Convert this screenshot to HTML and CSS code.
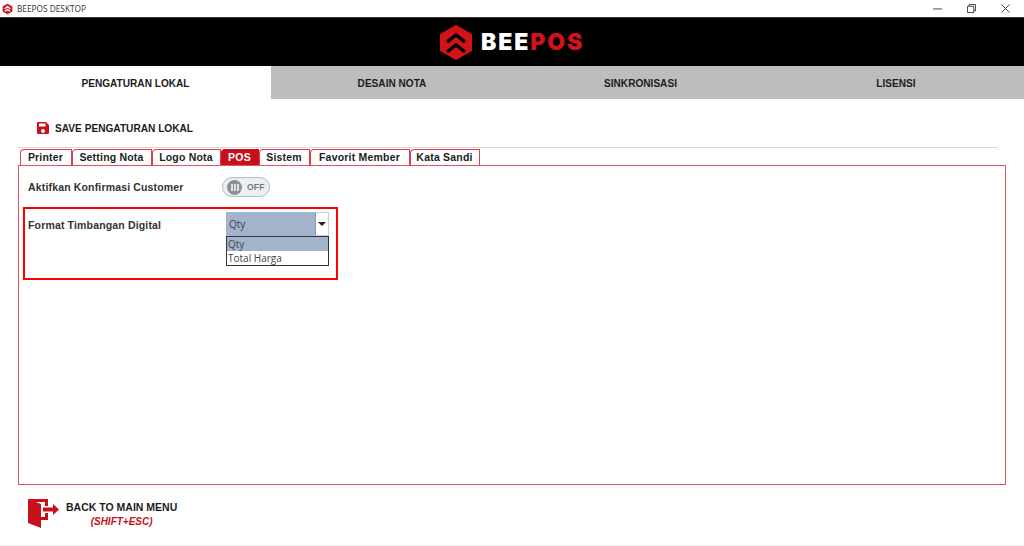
FILE: index.html
```html
<!DOCTYPE html>
<html lang="id">
<head>
<meta charset="utf-8">
<title>BEEPOS DESKTOP</title>
<link rel="stylesheet" href="styles.css">
</head>
<body>
<div class="app">
  <div class="titlebar">
    <div class="title-left">
      <svg class="title-logo" viewBox="0 0 24 24"><path fill="#d0121b" stroke="#d0121b" stroke-linejoin="round" d="M12 1l10 5.500v11L12 23 2 17.500v-11z"/><path fill="none" stroke="#fff" stroke-width="3" d="M5.500 11.500L12 7l6.500 4.500M6.500 17l5.500-4 5.500 4"/></svg>
      <span>BEEPOS DESKTOP</span>
    </div>
    <div class="win-controls">
      <svg viewBox="0 0 10 10" class="win-icon"><path d="M0 5.500h10" stroke="#333" fill="none"/></svg>
      <svg viewBox="0 0 10 10" class="win-icon"><path d="M.5 2.500h7v7h-7zM2.500 2.500v-2h7v7h-2" stroke="#333" fill="none"/></svg>
      <svg viewBox="0 0 10 10" class="win-icon"><path d="M.5.5l9 9M9.500.5l-9 9" stroke="#333" fill="none"/></svg>
    </div>
  </div>
  <header class="brand">
    <svg class="brand-logo" viewBox="0 0 32 35"><path fill="#d0121b" stroke="#d0121b" stroke-width="2" stroke-linejoin="round" d="M16 1l15 8.500v16L16 34 1 25.500v-16z"/><path fill="none" stroke="#000" stroke-width="3.400" d="M7 17l9-7 9 7M7 27l9-7 9 7"/></svg>
    <span class="brand-text">BEE<em>POS</em></span>
  </header>
  <nav class="main-tabs">
    <div class="main-tab active">PENGATURAN LOKAL</div>
    <div class="main-tab">DESAIN NOTA</div>
    <div class="main-tab">SINKRONISASI</div>
    <div class="main-tab">LISENSI</div>
  </nav>
  <div class="save-row">
    <svg class="save-icon" viewBox="0 0 12 12"><path fill="#c8101c" fill-rule="evenodd" d="M0 1a1 1 0 0 1 1-1h8l3 3v8a1 1 0 0 1-1 1H1a1 1 0 0 1-1-1zM2 1.500v3h6.500v-3zM6 7a2 2 0 1 0 0 4 2 2 0 0 0 0-4z"/></svg>
    <span>SAVE PENGATURAN LOKAL</span>
  </div>
  <div class="sub-tabs">
    <div class="sub-tab">Printer</div>
    <div class="sub-tab">Setting Nota</div>
    <div class="sub-tab">Logo Nota</div>
    <div class="sub-tab active">POS</div>
    <div class="sub-tab">Sistem</div>
    <div class="sub-tab">Favorit Member</div>
    <div class="sub-tab">Kata Sandi</div>
  </div>
  <section class="panel">
    <div class="field-row confirm">
      <label class="field-label">Aktifkan Konfirmasi Customer</label>
      <div class="toggle">
        <span class="knob"><i></i><i></i><i></i></span>
        <span class="toggle-text">OFF</span>
      </div>
    </div>
    <div class="field-row scale">
      <label class="field-label">Format Timbangan Digital</label>
      <div class="combo">
        <div class="combo-head">
          <span class="combo-value">Qty</span>
          <span class="combo-btn"><b></b></span>
        </div>
        <ul class="combo-list">
          <li class="selected">Qty</li>
          <li>Total Harga</li>
        </ul>
      </div>
      <div class="highlight"></div>
    </div>
  </section>
  <div class="back-row">
    <svg class="back-icon" viewBox="0 0 31 30"><path fill="#c8101c" d="M0 1l13 5v24L0 25z"/><path fill="#c8101c" d="M0 1h20v7h-3V4H6zM17 15h3v7h-7v-3h4z"/><path fill="#c8101c" d="M15 9.500h10V6l6 5.500-6 5.500v-3.500H15z"/></svg>
    <div class="back-text">
      <div class="back-main">BACK TO MAIN MENU</div>
      <div class="back-sub">(SHIFT+ESC)</div>
    </div>
  </div>
</div>
</body>
</html>
```
FILE: styles.css
```css
* { box-sizing: border-box; }
html, body { margin: 0; padding: 0; }
body { width: 1024px; height: 546px; overflow: hidden; background: #fff; font-family: "Liberation Sans", Arial, sans-serif; color: #1c1c1c; }
.app { height: 546px; border-bottom: 1px solid #eee; display: flex; flex-direction: column; }

.titlebar { height: 17px; flex: none; display: flex; justify-content: space-between; align-items: center; }
.title-left { display: flex; align-items: center; padding-left: 2px; font-family: "Open Sans", sans-serif; font-size: 8.300px; color: #333; }
.title-logo { width: 11px; height: 12px; margin-right: 4px; }
.win-controls { display: flex; gap: 25px; padding-right: 14px; }
.win-icon { width: 9px; height: 9px; display: block; }

.brand { height: 49px; flex: none; background: #000; border-top: 1px solid #333; display: flex; align-items: center; justify-content: center; }
.brand-logo { width: 32px; height: 35px; margin-right: 9px; }
.brand-text { font-family: "Inter", sans-serif; font-weight: 900; font-size: 23px; letter-spacing: 1.900px; color: #fff; }
.brand-text em { font-style: normal; color: #d0121b; }

.main-tabs { height: 33px; flex: none; display: grid; grid-template-columns: 271px 242px 1fr 256px; background: #bdbdbd; }
.main-tab { display: flex; align-items: center; justify-content: center; padding-top: 2px; font-size: 10.100px; font-weight: 700; }
.main-tab.active { background: #fff; }

.save-row { flex: none; height: 48px; padding: 23px 0 0 37px; display: flex; align-items: flex-start; font-size: 10.130px; font-weight: 700; }
.save-icon { width: 12px; height: 12px; margin-right: 6px; }
.save-row span { line-height: 14px; }

.sub-tabs { flex: none; height: 18px; margin: 0 26px 0 18px; padding: 1px 0 0 2px; border-top: 1px solid #d8d8d8; display: grid; grid-template-columns: 52px 80px 69px 38px 51px 100px 70px; justify-content: start; }
.sub-tab { height: 16px; padding-right: 1px; border: 1px solid #d9404a; border-bottom: 0; border-radius: 4px 1px 0 0; font-size: 10.500px; font-weight: 700; letter-spacing: .2px; line-height: 15px; text-align: center; background: #fff; }
.sub-tab.active { background: #c8101c; border-color: #c8101c; color: #fff; }

.panel { flex: none; width: 988px; height: 320px; margin-left: 18px; border: 1px solid #e0555d; padding: 11px 0 0 9px; }
.field-row { display: flex; position: relative; }
.field-label { font-size: 10.500px; font-weight: 700; letter-spacing: .16px; color: #333; }
.confirm { align-items: center; height: 20px; }
.confirm .field-label { width: 194px; }
.toggle { width: 48px; height: 20px; border: 1px solid #b4bcc4; border-radius: 10px; background: #eceff1; display: flex; align-items: center; padding-left: 4px; }
.knob { width: 15px; height: 15px; border-radius: 50%; background: #8a9199; display: flex; justify-content: center; align-items: center; gap: 1px; }
.knob i { width: 2px; height: 7px; background: #dfe2e5; display: block; }
.toggle-text { font-size: 8.500px; font-weight: 700; color: #777; margin-left: 5px; letter-spacing: .2px; }

.scale { margin-top: 15px; height: 60px; align-items: flex-start; }
.scale .field-label { width: 198px; padding-top: 7px; }
.combo { width: 103px; position: relative; }
.combo-head { height: 24px; display: flex; font-family: "Open Sans", sans-serif; font-size: 10px; color: #444; }
.combo-value { flex: 1; background: #a1b4cc; padding: 5px 0 0 3px; }
.combo-btn { width: 14px; border: 1px solid #c4cdd8; border-left: 1px solid #8d9cb0; background: #fff; display: flex; align-items: center; justify-content: center; }
.combo-btn b { border: 4px solid transparent; border-top: 4px solid #222; border-bottom: 0; display: block; }
.combo-list { margin: 0; padding: 0; list-style: none; border: 1px solid #333; height: 30px; font-family: "Open Sans", sans-serif; font-size: 10px; color: #444; background: #fff; }
.combo-list li { height: 14px; line-height: 14px; padding-left: 1px; }
.combo-list li.selected { background: #a1b4cc; }
.highlight { position: absolute; left: -5px; top: -5px; width: 315px; height: 73px; border: 2px solid #f00; pointer-events: none; }

.back-row { flex: none; margin: 13px 0 0 28px; display: flex; }
.back-icon { width: 31px; height: 30px; margin-right: 7px; }
.back-main { font-size: 10.500px; font-weight: 700; line-height: 12px; margin-top: 3px; }
.back-sub { font-size: 10px; font-weight: 700; font-style: italic; color: #c8101c; text-align: center; line-height: 12px; margin-top: 3px; }
```
